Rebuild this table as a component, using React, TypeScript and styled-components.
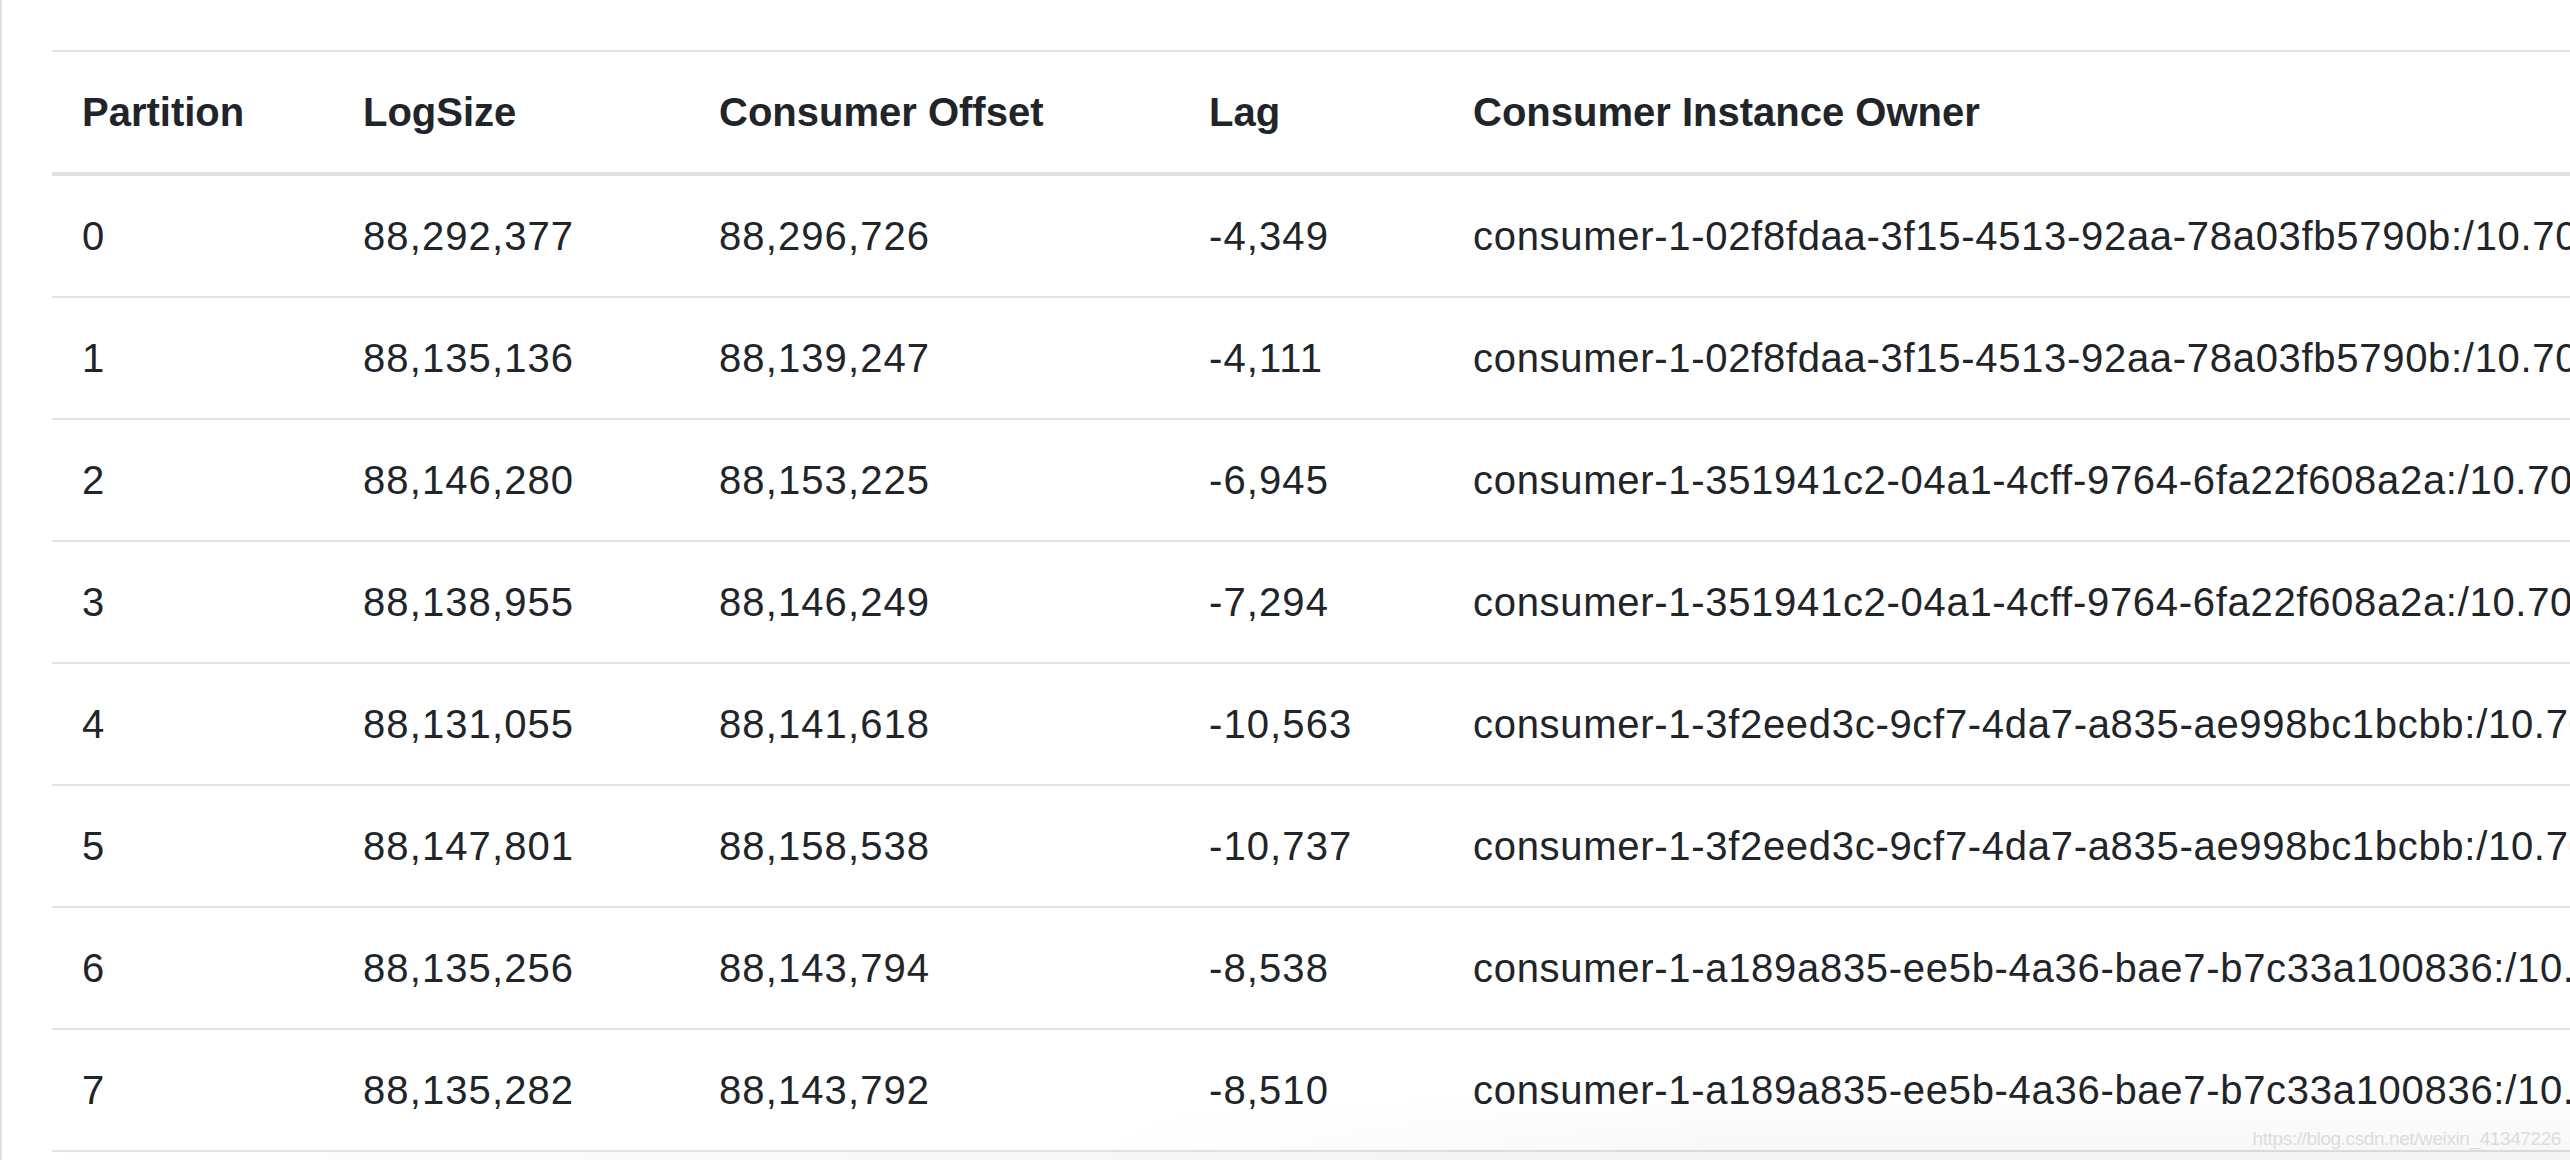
import React from "react";
import styled, { createGlobalStyle } from "styled-components";

const GlobalStyle = createGlobalStyle`
  html, body {
    margin: 0;
    padding: 0;
    background: #ffffff;
  }
  body {
    font-family: "Liberation Sans", Arial, Helvetica, sans-serif;
    color: #212529;
  }
`;

const Page = styled.div`
  position: relative;
  box-sizing: border-box;
  width: 2570px;
  height: 1160px;
  overflow: hidden;
  border-left: 2px solid #e1e1e1;
  padding: 50px 0 0 50px;
  background: #ffffff;
`;

const Table = styled.table`
  border-collapse: separate;
  border-spacing: 0;
  font-size: 40px;
  line-height: 60px;
  color: #212529;
  white-space: nowrap;
`;

const HeadCell = styled.th<{ $w?: number }>`
  box-sizing: border-box;
  width: ${(p) => (p.$w ? `${p.$w}px` : "auto")};
  min-width: ${(p) => (p.$w ? `${p.$w}px` : "auto")};
  padding: 30px;
  text-align: left;
  vertical-align: bottom;
  font-weight: 700;
  border-top: 2px solid #dee2e6;
  border-bottom: 4px solid #dee2e6;
`;

const Row = styled.tr`
  & + & > td {
    border-top: 2px solid #dee2e6;
  }
  &:last-child > td {
    border-bottom: 2px solid #dee2e6;
  }
`;

const Cell = styled.td<{ $spacing?: number }>`
  padding: 30px;
  vertical-align: top;
  font-weight: 400;
  letter-spacing: ${(p) => p.$spacing ?? 1.1}px;
`;

const Shade = styled.div`
  position: absolute;
  right: 0;
  bottom: 0;
  width: 1500px;
  height: 70px;
  pointer-events: none;
  background: linear-gradient(to bottom, rgba(0, 0, 0, 0) 0%, rgba(0, 0, 0, 0.035) 100%);
  -webkit-mask-image: linear-gradient(to right, transparent 0%, #000 45%);
  mask-image: linear-gradient(to right, transparent 0%, #000 45%);
`;

const Footer = styled.div`
  position: absolute;
  left: 0;
  right: 0;
  bottom: 0;
  height: 8px;
  background: linear-gradient(to right, #ffffff 0%, #f4f4f4 60%);
  pointer-events: none;
`;

const Watermark = styled.div`
  position: absolute;
  right: 9px;
  bottom: 11px;
  font-family: "Liberation Sans", Arial, sans-serif;
  font-size: 19px;
  line-height: 20px;
  letter-spacing: -0.4px;
  color: #dcdcdc;
  pointer-events: none;
`;

type Entry = {
  partition: number;
  logSize: string;
  offset: string;
  lag: string;
  owner: string;
};

const rows: Entry[] = [
  { partition: 0, logSize: "88,292,377", offset: "88,296,726", lag: "-4,349", owner: "consumer-1-02f8fdaa-3f15-4513-92aa-78a03fb5790b:/10.70.0.11" },
  { partition: 1, logSize: "88,135,136", offset: "88,139,247", lag: "-4,111", owner: "consumer-1-02f8fdaa-3f15-4513-92aa-78a03fb5790b:/10.70.0.11" },
  { partition: 2, logSize: "88,146,280", offset: "88,153,225", lag: "-6,945", owner: "consumer-1-351941c2-04a1-4cff-9764-6fa22f608a2a:/10.70.0.12" },
  { partition: 3, logSize: "88,138,955", offset: "88,146,249", lag: "-7,294", owner: "consumer-1-351941c2-04a1-4cff-9764-6fa22f608a2a:/10.70.0.12" },
  { partition: 4, logSize: "88,131,055", offset: "88,141,618", lag: "-10,563", owner: "consumer-1-3f2eed3c-9cf7-4da7-a835-ae998bc1bcbb:/10.70.0.13" },
  { partition: 5, logSize: "88,147,801", offset: "88,158,538", lag: "-10,737", owner: "consumer-1-3f2eed3c-9cf7-4da7-a835-ae998bc1bcbb:/10.70.0.13" },
  { partition: 6, logSize: "88,135,256", offset: "88,143,794", lag: "-8,538", owner: "consumer-1-a189a835-ee5b-4a36-bae7-b7c33a100836:/10.70.0.14" },
  { partition: 7, logSize: "88,135,282", offset: "88,143,792", lag: "-8,510", owner: "consumer-1-a189a835-ee5b-4a36-bae7-b7c33a100836:/10.70.0.14" },
];

export default function App() {
  return (
    <>
      <GlobalStyle />
      <Page>
        <Table>
          <thead>
            <tr>
              <HeadCell $w={281}>Partition</HeadCell>
              <HeadCell $w={356}>LogSize</HeadCell>
              <HeadCell $w={490}>Consumer Offset</HeadCell>
              <HeadCell $w={264}>Lag</HeadCell>
              <HeadCell>Consumer Instance Owner</HeadCell>
            </tr>
          </thead>
          <tbody>
            {rows.map((r) => (
              <Row key={r.partition}>
                <Cell>{r.partition}</Cell>
                <Cell>{r.logSize}</Cell>
                <Cell>{r.offset}</Cell>
                <Cell>{r.lag}</Cell>
                <Cell $spacing={0.7}>{r.owner}</Cell>
              </Row>
            ))}
          </tbody>
        </Table>
        <Shade />
        <Footer />
        <Watermark>https://blog.csdn.net/weixin_41347226</Watermark>
      </Page>
    </>
  );
}
